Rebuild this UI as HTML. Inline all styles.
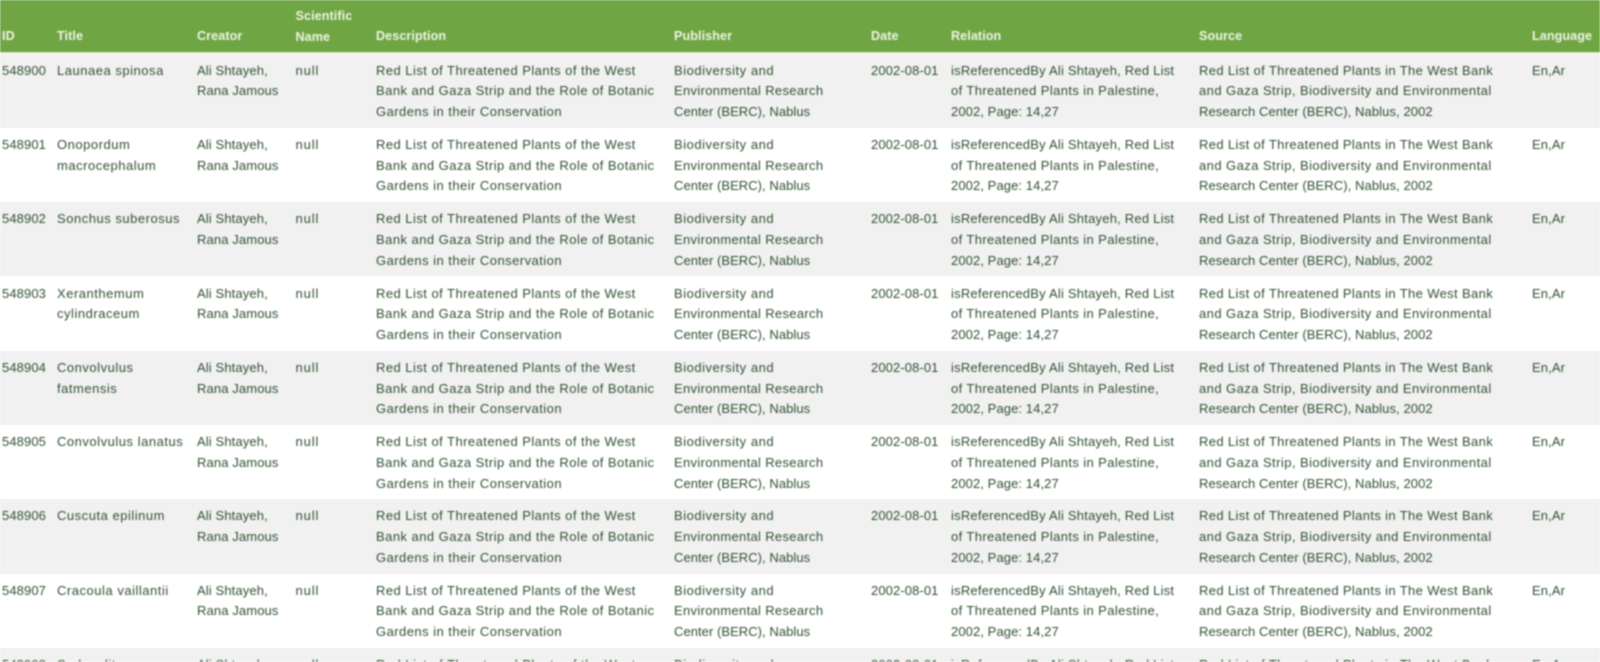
<!DOCTYPE html>
<html lang="en">
<head>
<meta charset="utf-8">
<title>Red List of Threatened Plants</title>
<style>
html,body{margin:0;padding:0;width:1600px;height:662px;overflow:hidden;background:#fff}
#w{position:relative;width:1600px;height:662px;overflow:hidden;filter:blur(.8px);font:13px/20.7px "Liberation Sans",sans-serif;color:#2f5030}
.h{position:absolute;left:0;top:0;width:1600px;height:52px;background:#6fa543;color:#eef5e4;font-size:12.6px;font-weight:bold;border-bottom:1px solid #cfdcc0}
.r{position:absolute;left:0;width:1600px;height:74.3px;overflow:hidden}
.g{background:#f1f1f1}
.c{position:absolute;top:7.2px;white-space:nowrap}
.c span{display:block}
.h .c{top:26.2px}
.h .e{top:6px}
.a{left:2px;letter-spacing:.1px}.b{left:57px;letter-spacing:.52px}.d{left:197px;letter-spacing:.12px}.e{left:295.5px}.f{left:376px;letter-spacing:.46px}.i{left:674px}.j{left:871px;letter-spacing:.1px}.k{left:951px}.l{left:1199px}.m{left:1532px;letter-spacing:.1px}
.r .e{letter-spacing:.9px}
.h .c{letter-spacing:.08px}
.p1{letter-spacing:.52px}.p2{letter-spacing:.32px}.p3{letter-spacing:.05px}
.k1{letter-spacing:.22px}.k2{letter-spacing:.39px}.k3{letter-spacing:.09px}
.s1{letter-spacing:.36px}.s2{letter-spacing:.44px}.s3{letter-spacing:.09px}
.last{height:14px}
</style>
</head>
<body>
<div id="w">
<div class="h">
<div class="c a">ID</div><div class="c b" style="letter-spacing:.08px">Title</div><div class="c d">Creator</div><div class="c e">Scientific<br>Name</div><div class="c f" style="letter-spacing:.08px">Description</div><div class="c i">Publisher</div><div class="c j">Date</div><div class="c k">Relation</div><div class="c l">Source</div><div class="c m">Language</div>
</div>

<div class="r g" style="top:53.5px">
<div class="c a">548900</div><div class="c b">Launaea spinosa</div><div class="c d">Ali Shtayeh,<br>Rana Jamous</div><div class="c e">null</div><div class="c f">Red List of Threatened Plants of the West<br>Bank and Gaza Strip and the Role of Botanic<br>Gardens in their Conservation</div><div class="c i"><span class="p1">Biodiversity and</span><span class="p2">Environmental Research</span><span class="p3">Center (BERC), Nablus</span></div><div class="c j">2002-08-01</div><div class="c k"><span class="k1">isReferencedBy Ali Shtayeh, Red List</span><span class="k2">of Threatened Plants in Palestine,</span><span class="k3">2002, Page: 14,27</span></div><div class="c l"><span class="s1">Red List of Threatened Plants in The West Bank</span><span class="s2">and Gaza Strip, Biodiversity and Environmental</span><span class="s3">Research Center (BERC), Nablus, 2002</span></div><div class="c m">En,Ar</div>
</div>

<div class="r" style="top:127.8px">
<div class="c a">548901</div><div class="c b">Onopordum<br>macrocephalum</div><div class="c d">Ali Shtayeh,<br>Rana Jamous</div><div class="c e">null</div><div class="c f">Red List of Threatened Plants of the West<br>Bank and Gaza Strip and the Role of Botanic<br>Gardens in their Conservation</div><div class="c i"><span class="p1">Biodiversity and</span><span class="p2">Environmental Research</span><span class="p3">Center (BERC), Nablus</span></div><div class="c j">2002-08-01</div><div class="c k"><span class="k1">isReferencedBy Ali Shtayeh, Red List</span><span class="k2">of Threatened Plants in Palestine,</span><span class="k3">2002, Page: 14,27</span></div><div class="c l"><span class="s1">Red List of Threatened Plants in The West Bank</span><span class="s2">and Gaza Strip, Biodiversity and Environmental</span><span class="s3">Research Center (BERC), Nablus, 2002</span></div><div class="c m">En,Ar</div>
</div>

<div class="r g" style="top:202.1px">
<div class="c a">548902</div><div class="c b">Sonchus suberosus</div><div class="c d">Ali Shtayeh,<br>Rana Jamous</div><div class="c e">null</div><div class="c f">Red List of Threatened Plants of the West<br>Bank and Gaza Strip and the Role of Botanic<br>Gardens in their Conservation</div><div class="c i"><span class="p1">Biodiversity and</span><span class="p2">Environmental Research</span><span class="p3">Center (BERC), Nablus</span></div><div class="c j">2002-08-01</div><div class="c k"><span class="k1">isReferencedBy Ali Shtayeh, Red List</span><span class="k2">of Threatened Plants in Palestine,</span><span class="k3">2002, Page: 14,27</span></div><div class="c l"><span class="s1">Red List of Threatened Plants in The West Bank</span><span class="s2">and Gaza Strip, Biodiversity and Environmental</span><span class="s3">Research Center (BERC), Nablus, 2002</span></div><div class="c m">En,Ar</div>
</div>

<div class="r" style="top:276.4px">
<div class="c a">548903</div><div class="c b">Xeranthemum<br>cylindraceum</div><div class="c d">Ali Shtayeh,<br>Rana Jamous</div><div class="c e">null</div><div class="c f">Red List of Threatened Plants of the West<br>Bank and Gaza Strip and the Role of Botanic<br>Gardens in their Conservation</div><div class="c i"><span class="p1">Biodiversity and</span><span class="p2">Environmental Research</span><span class="p3">Center (BERC), Nablus</span></div><div class="c j">2002-08-01</div><div class="c k"><span class="k1">isReferencedBy Ali Shtayeh, Red List</span><span class="k2">of Threatened Plants in Palestine,</span><span class="k3">2002, Page: 14,27</span></div><div class="c l"><span class="s1">Red List of Threatened Plants in The West Bank</span><span class="s2">and Gaza Strip, Biodiversity and Environmental</span><span class="s3">Research Center (BERC), Nablus, 2002</span></div><div class="c m">En,Ar</div>
</div>

<div class="r g" style="top:350.7px">
<div class="c a">548904</div><div class="c b">Convolvulus<br>fatmensis</div><div class="c d">Ali Shtayeh,<br>Rana Jamous</div><div class="c e">null</div><div class="c f">Red List of Threatened Plants of the West<br>Bank and Gaza Strip and the Role of Botanic<br>Gardens in their Conservation</div><div class="c i"><span class="p1">Biodiversity and</span><span class="p2">Environmental Research</span><span class="p3">Center (BERC), Nablus</span></div><div class="c j">2002-08-01</div><div class="c k"><span class="k1">isReferencedBy Ali Shtayeh, Red List</span><span class="k2">of Threatened Plants in Palestine,</span><span class="k3">2002, Page: 14,27</span></div><div class="c l"><span class="s1">Red List of Threatened Plants in The West Bank</span><span class="s2">and Gaza Strip, Biodiversity and Environmental</span><span class="s3">Research Center (BERC), Nablus, 2002</span></div><div class="c m">En,Ar</div>
</div>

<div class="r" style="top:425px">
<div class="c a">548905</div><div class="c b">Convolvulus lanatus</div><div class="c d">Ali Shtayeh,<br>Rana Jamous</div><div class="c e">null</div><div class="c f">Red List of Threatened Plants of the West<br>Bank and Gaza Strip and the Role of Botanic<br>Gardens in their Conservation</div><div class="c i"><span class="p1">Biodiversity and</span><span class="p2">Environmental Research</span><span class="p3">Center (BERC), Nablus</span></div><div class="c j">2002-08-01</div><div class="c k"><span class="k1">isReferencedBy Ali Shtayeh, Red List</span><span class="k2">of Threatened Plants in Palestine,</span><span class="k3">2002, Page: 14,27</span></div><div class="c l"><span class="s1">Red List of Threatened Plants in The West Bank</span><span class="s2">and Gaza Strip, Biodiversity and Environmental</span><span class="s3">Research Center (BERC), Nablus, 2002</span></div><div class="c m">En,Ar</div>
</div>

<div class="r g" style="top:499.3px">
<div class="c a">548906</div><div class="c b">Cuscuta epilinum</div><div class="c d">Ali Shtayeh,<br>Rana Jamous</div><div class="c e">null</div><div class="c f">Red List of Threatened Plants of the West<br>Bank and Gaza Strip and the Role of Botanic<br>Gardens in their Conservation</div><div class="c i"><span class="p1">Biodiversity and</span><span class="p2">Environmental Research</span><span class="p3">Center (BERC), Nablus</span></div><div class="c j">2002-08-01</div><div class="c k"><span class="k1">isReferencedBy Ali Shtayeh, Red List</span><span class="k2">of Threatened Plants in Palestine,</span><span class="k3">2002, Page: 14,27</span></div><div class="c l"><span class="s1">Red List of Threatened Plants in The West Bank</span><span class="s2">and Gaza Strip, Biodiversity and Environmental</span><span class="s3">Research Center (BERC), Nablus, 2002</span></div><div class="c m">En,Ar</div>
</div>

<div class="r" style="top:573.6px">
<div class="c a">548907</div><div class="c b">Cracoula vaillantii</div><div class="c d">Ali Shtayeh,<br>Rana Jamous</div><div class="c e">null</div><div class="c f">Red List of Threatened Plants of the West<br>Bank and Gaza Strip and the Role of Botanic<br>Gardens in their Conservation</div><div class="c i"><span class="p1">Biodiversity and</span><span class="p2">Environmental Research</span><span class="p3">Center (BERC), Nablus</span></div><div class="c j">2002-08-01</div><div class="c k"><span class="k1">isReferencedBy Ali Shtayeh, Red List</span><span class="k2">of Threatened Plants in Palestine,</span><span class="k3">2002, Page: 14,27</span></div><div class="c l"><span class="s1">Red List of Threatened Plants in The West Bank</span><span class="s2">and Gaza Strip, Biodiversity and Environmental</span><span class="s3">Research Center (BERC), Nablus, 2002</span></div><div class="c m">En,Ar</div>
</div>

<div class="r g last" style="top:647.9px">
<div class="c a" style="height:6.8px;overflow:hidden">548908</div><div class="c b" style="height:6.8px;overflow:hidden">Sedum litoreum</div><div class="c d" style="height:6.8px;overflow:hidden">Ali Shtayeh,</div><div class="c e" style="height:6.8px;overflow:hidden">null</div><div class="c f" style="height:6.8px;overflow:hidden">Red List of Threatened Plants of the West</div><div class="c i p1" style="height:6.8px;overflow:hidden">Biodiversity and</div><div class="c j" style="height:6.8px;overflow:hidden">2002-08-01</div><div class="c k k1" style="height:6.8px;overflow:hidden">isReferencedBy Ali Shtayeh, Red List</div><div class="c l s1" style="height:6.8px;overflow:hidden">Red List of Threatened Plants in The West Bank</div><div class="c m" style="height:6.8px;overflow:hidden">En,Ar</div>
</div>
</div>
</body>
</html>
